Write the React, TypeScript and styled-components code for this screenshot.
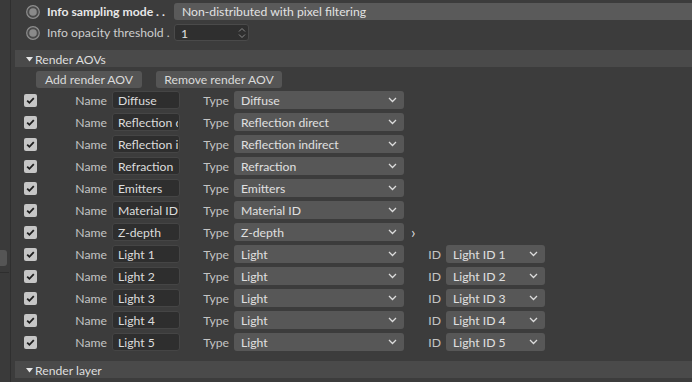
import React from 'react';
import styled, { createGlobalStyle } from 'styled-components';

const GlobalStyle = createGlobalStyle`
  html, body {
    margin: 0;
    padding: 0;
    background: #3c3c3c;
  }
  body {
    font-family: Lato, 'Noto Sans', sans-serif;
    font-size: 12.2px;
    color: #d2d2d2;
  }
`;

interface Aov {
  name: string;
  type: string;
  lightId?: string;
  more?: boolean;
}

const aovs: Aov[] = [
  { name: 'Diffuse', type: 'Diffuse' },
  { name: 'Reflection direct', type: 'Reflection direct' },
  { name: 'Reflection indirect', type: 'Reflection indirect' },
  { name: 'Refraction', type: 'Refraction' },
  { name: 'Emitters', type: 'Emitters' },
  { name: 'Material ID', type: 'Material ID' },
  { name: 'Z-depth', type: 'Z-depth', more: true },
  { name: 'Light 1', type: 'Light', lightId: 'Light ID 1' },
  { name: 'Light 2', type: 'Light', lightId: 'Light ID 2' },
  { name: 'Light 3', type: 'Light', lightId: 'Light ID 3' },
  { name: 'Light 4', type: 'Light', lightId: 'Light ID 4' },
  { name: 'Light 5', type: 'Light', lightId: 'Light ID 5' },
];

const Chevron = () => (
  <svg width="9" height="6" viewBox="0 0 9 6">
    <path d="M1 1l3.5 3.5L8 1" fill="none" stroke="#dcdcdc" strokeWidth="1.3" />
  </svg>
);

const Radio = () => (
  <svg width="14" height="14" viewBox="0 0 14 14">
    <circle cx="7" cy="7" r="6.3" fill="#4a4a4a" stroke="#8e8e8e" strokeWidth="1.2" />
    <circle cx="7" cy="7" r="3.8" fill="#8a8a8a" />
  </svg>
);

const Check = () => (
  <svg width="13" height="13" viewBox="0 0 13 13">
    <rect x="0" y="0" width="13" height="13" rx="2" fill="#c6c6c6" />
    <path d="M3.2 6.6l2.2 2.2 4.4-4.6" fill="none" stroke="#1e1e1e" strokeWidth="1.8" />
  </svg>
);

const Triangle = () => (
  <svg width="7" height="5" viewBox="0 0 7 5">
    <path d="M0 0h7L3.5 4.5z" fill="#e6e6e6" />
  </svg>
);

export default function App() {
  return (
    <>
      <GlobalStyle />
      <Screen>
        <SideStrip>
          <SideTab />
          <SideRule />
        </SideStrip>
        <Main>
          <ParamRow>
            <Radio />
            <ParamLabel bold>Info sampling mode . .</ParamLabel>
            <WideSelect>Non-distributed with pixel filtering</WideSelect>
          </ParamRow>
          <ParamRow>
            <Radio />
            <ParamLabel>Info opacity threshold .</ParamLabel>
            <NumberField>
              1
              <svg width="8" height="12" viewBox="0 0 8 12">
                <path d="M1 4.5l3-3 3 3M1 7.5l3 3 3-3" fill="none" stroke="#8a8a8a" strokeWidth="1" />
              </svg>
            </NumberField>
          </ParamRow>

          <SectionHeader>
            <Triangle />
            Render AOVs
          </SectionHeader>
          <ButtonRow>
            <Button width={106}>Add render AOV</Button>
            <Button width={126}>Remove render AOV</Button>
          </ButtonRow>

          <AovList>
            {aovs.map((a) => (
              <AovRow key={a.name}>
                <Check />
                <FieldLabel width={70}>Name</FieldLabel>
                <NameField>
                  <NameText>{a.name}</NameText>
                </NameField>
                <FieldLabel width={49}>Type</FieldLabel>
                <Select width={170}>
                  <span>{a.type}</span>
                  <Chevron />
                </Select>
                {a.more && <More>›</More>}
                {a.lightId && (
                  <>
                    <FieldLabel width={37}>ID</FieldLabel>
                    <Select width={99}>
                      <span>{a.lightId}</span>
                      <Chevron />
                    </Select>
                  </>
                )}
              </AovRow>
            ))}
          </AovList>

          <SectionHeader last>
            <Triangle />
            Render layer
          </SectionHeader>
        </Main>
      </Screen>
    </>
  );
}

const Screen = styled.div`
  display: flex;
  width: 692px;
  height: 382px;
  overflow: hidden;
  background: #3c3c3c;
`;

const SideStrip = styled.div`
  width: 11px;
  border-right: 1px solid #2f2f2f;
  background: #3a3a3a;
  display: flex;
  flex-direction: column;
  padding-top: 250px;
  box-sizing: border-box;
`;

const SideTab = styled.div`
  width: 7px;
  height: 16px;
  border-radius: 0 3px 3px 0;
  background: #555555;
`;

const SideRule = styled.div`
  margin-top: 6px;
  width: 9px;
  height: 1px;
  background: #2e2e2e;
`;

const Main = styled.div`
  flex: 1;
  display: flex;
  flex-direction: column;
  padding-top: 3px;
`;

const ParamRow = styled.div`
  display: flex;
  align-items: center;
  height: 17px;
  margin-bottom: 4px;
  padding-left: 15px;
  svg {
    margin-right: 7px;
  }
`;

const ParamLabel = styled.div<{ bold?: boolean }>`
  width: 127px;
  font-weight: ${(p) => (p.bold ? 700 : 400)};
  color: ${(p) => (p.bold ? '#e8e8e8' : '#cdcdcd')};
  white-space: nowrap;
  line-height: 18px;
`;

const WideSelect = styled.div`
  flex: 1;
  height: 17px;
  line-height: 18px;
  background: #5a5a5a;
  color: #e2e2e2;
  padding-left: 8px;
  border-radius: 3px 0 0 3px;
`;

const NumberField = styled.div`
  width: 75px;
  height: 17px;
  box-sizing: border-box;
  display: flex;
  align-items: center;
  justify-content: space-between;
  padding: 1px 2px 0 6px;
  background: #2f2f2f;
  border: 1px solid #4a4a4a;
  border-radius: 3px;
  color: #e0e0e0;
  svg {
    margin: 0;
  }
`;

const SectionHeader = styled.div<{ last?: boolean }>`
  margin: ${(p) => (p.last ? '10px' : '5px')} 0 0 4px;
  height: 17px;
  background: #4a4a4a;
  display: flex;
  align-items: center;
  gap: 2px;
  padding: 1px 0 0 11px;
  box-sizing: border-box;
  color: #dedede;
`;

const ButtonRow = styled.div`
  display: flex;
  gap: 14px;
  margin: 4px 0 0 25px;
`;

const Button = styled.div<{ width: number }>`
  width: ${(p) => p.width}px;
  height: 17px;
  line-height: 18px;
  background: #555555;
  border-radius: 3px;
  text-align: center;
  color: #dadada;
`;

const AovList = styled.div`
  display: flex;
  flex-direction: column;
  gap: 4px;
  margin-top: 3px;
  padding-left: 13px;
`;

const AovRow = styled.div`
  display: flex;
  align-items: center;
  height: 18px;
  line-height: 19px;
`;

const FieldLabel = styled.div<{ width: number }>`
  width: ${(p) => p.width}px;
  text-align: right;
  padding-right: 5px;
  box-sizing: content-box;
  color: #c4c4c4;
  white-space: nowrap;
`;

const NameField = styled.div`
  width: 68px;
  height: 18px;
  box-sizing: border-box;
  background: #2e2e2e;
  border: 1px solid #454545;
  border-radius: 3px;
  padding: 0 1px 0 5px;
  overflow: hidden;
`;

const NameText = styled.div`
  line-height: 17px;
  color: #dcdcdc;
  white-space: nowrap;
  overflow: hidden;
`;

const Select = styled.div<{ width: number }>`
  width: ${(p) => p.width}px;
  height: 18px;
  box-sizing: border-box;
  background: #575757;
  border-radius: 3px;
  display: flex;
  align-items: center;
  justify-content: space-between;
  padding: 0 7px 0 7px;
  color: #e0e0e0;
  white-space: nowrap;
`;

const More = styled.div`
  margin-left: 7px;
  color: #dcdcdc;
  font-size: 16px;
  line-height: 16px;
`;
